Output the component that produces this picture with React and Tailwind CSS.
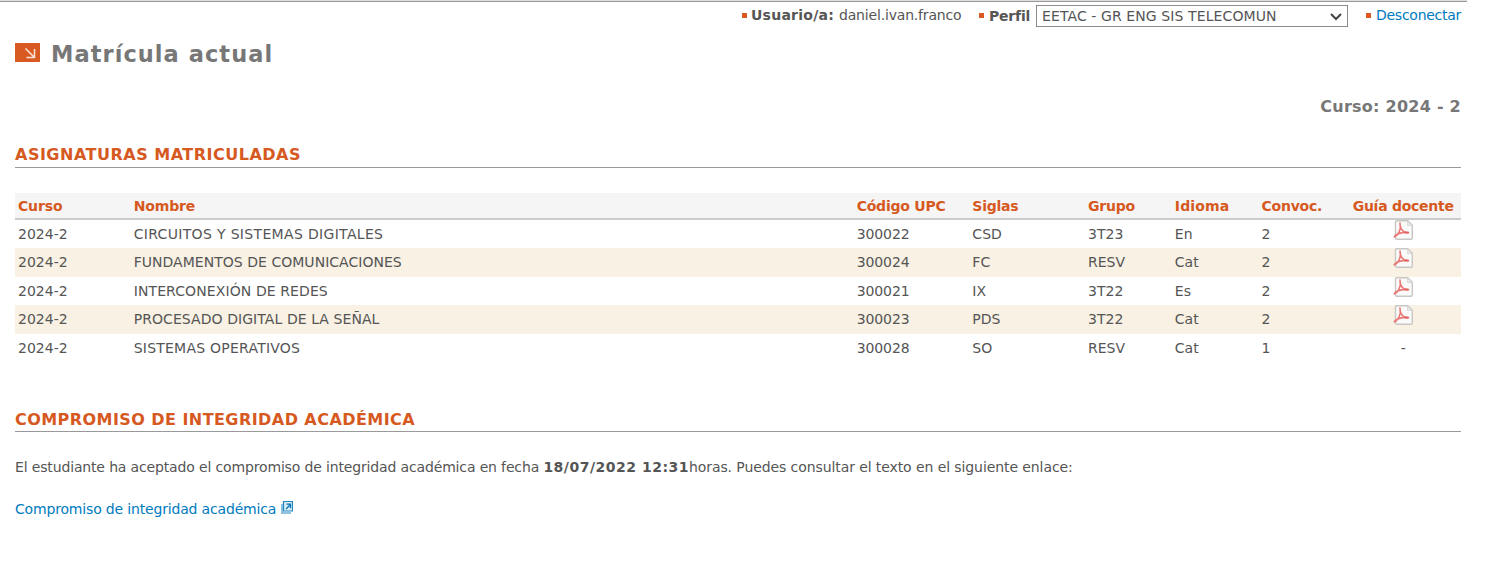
const columns = [
  ["Curso", "tracking-[-0.15px]"],
  ["Nombre", "tracking-[-0.15px]"],
  ["Código UPC", "tracking-[-0.22px]"],
  ["Siglas", "tracking-[-0.25px]"],
  ["Grupo", "tracking-[-0.25px]"],
  ["Idioma", "tracking-[0.15px]"],
  ["Convoc.", "tracking-[-0.25px]"],
];

const rows = [
  { cells: ["2024-2", "CIRCUITOS Y SISTEMAS DIGITALES", "300022", "CSD", "3T23", "En", "2"], name: "tracking-[0.33px]", pdf: true, style: "h-[28px]" },
  { cells: ["2024-2", "FUNDAMENTOS DE COMUNICACIONES", "300024", "FC", "RESV", "Cat", "2"], name: "tracking-[0.03px]", pdf: true, style: "h-[29px] bg-[#f8f1e4]" },
  { cells: ["2024-2", "INTERCONEXIÓN DE REDES", "300021", "IX", "3T22", "Es", "2"], name: "tracking-[0.1px]", pdf: true, style: "h-[28px]" },
  { cells: ["2024-2", "PROCESADO DIGITAL DE LA SEÑAL", "300023", "PDS", "3T22", "Cat", "2"], name: "tracking-[0.07px]", pdf: true, style: "h-[29px] bg-[#f8f1e4]" },
  { cells: ["2024-2", "SISTEMAS OPERATIVOS", "300028", "SO", "RESV", "Cat", "1"], name: "tracking-[0.23px]", pdf: false, style: "h-[28px]" },
];

const grid = "grid grid-cols-[8fr_50fr_8fr_8fr_6fr_6fr_6fr_8fr]";

function PdfIcon() {
  return (
    <svg className="block h-5 w-5" viewBox="0 0 20 20" fill="none">
      <path d="M2.500 2Q2.500 .7 3.800 .7H14.800l4.500 4.500V18q0 1.300-1.300 1.300H3.800Q2.500 19.300 2.500 18z" fill="#fafafa" stroke="#c8c7c4" strokeWidth="1.400" />
      <path d="M14.500 1v4.500h4.500z" fill="#e9e9e9" stroke="#d3d3d1" strokeWidth=".8" />
      <path d="M7 3c.8 3.200 .4 6.200-1 9.200-1.200 2.300-2.600 3.800-4.700 4.800M7 3c0 3.500 1.200 7 4 8.700 1.500 .9 3 1.100 4.500 1M1.300 16.800c2-2.800 6.500-4.200 10.500-4.400" stroke="#ea7976" strokeWidth="1.600" strokeLinecap="round" />
      <path d="M11.500 12.500h4" stroke="#e2605c" strokeWidth="2" />
    </svg>
  );
}

function Bullet({ className }) {
  return <span className={"h-[5px] w-[5px] shrink-0 bg-[#d85a22] " + className} />;
}

function SectionTitle({ children, className }) {
  return (
    <h2 className={"flex items-start border-b border-[#999] pt-px text-[16px] leading-5 font-bold whitespace-nowrap text-[#d6591f] " + className}>
      {children}
    </h2>
  );
}

export default function App() {
  return (
    <div className="h-[580px] w-[1500px] overflow-hidden bg-white font-['DejaVu_Sans',Verdana,sans-serif] text-[14px] leading-5 text-[#555]">
      <div className="h-[2px] w-[1467px] border-b border-[#999] bg-[#ddd]" />
      <div className="ml-[15px] w-[1446px]">
        <header className="flex h-[30px] items-start justify-end whitespace-nowrap">
          <Bullet className="mt-[11px] mr-1" />
          <b className="mt-[3px] w-[88px] tracking-[0.25px]">Usuario/a:</b>
          <span className="mt-[3px] w-[140px] tracking-[-0.18px]">daniel.ivan.franco</span>
          <Bullet className="mt-[11px] mr-[5px]" />
          <b className="mt-[4px] w-[47px] tracking-[-0.2px]">Perfil</b>
          <div className="mt-[3px] flex h-[22px] w-[312px] items-center justify-between border border-[#8c8c8c] pr-[5px] pl-[5px]">
            <span className="leading-5 tracking-[0.1px]">EETAC - GR ENG SIS TELECOMUN</span>
            <svg className="h-3 w-3" viewBox="0 0 12 12" fill="none" stroke="#444" strokeWidth="2">
              <path d="M1 4l5 5 5-5" />
            </svg>
          </div>
          <Bullet className="mt-[11px] mr-[5px] ml-[18px]" />
          <a className="mt-[3px] w-[85px] tracking-[-0.26px] text-[#007bc0]">Desconectar</a>
        </header>

        <div className="flex h-[64px] items-start pt-[8px]">
          <svg className="mt-[3px] h-[19px] w-[25px]" viewBox="0 0 25 19" fill="none">
            <path d="M0 0h25v19H0z" fill="#d85a22" />
            <path d="M10.500 5.500l8.500 8.500M11.500 14.500h8V6" stroke="#fbe3d8" strokeWidth="1.500" />
          </svg>
          <h1 className="ml-[11px] text-[22.5px] leading-[28px] font-bold tracking-[1.05px] whitespace-nowrap text-[#777]">Matrícula actual</h1>
        </div>

        <div className="flex h-[48px] justify-end pt-px text-[16px] font-bold tracking-[0.25px] whitespace-nowrap text-[#777]">Curso: 2024 - 2</div>

        <SectionTitle className="h-[24px] tracking-[0.5px]">ASIGNATURAS MATRICULADAS</SectionTitle>

        <div className="mt-[25px]">
          <div className={grid + " h-[27px] items-start border-b-2 border-[#ccc] bg-[#f5f5f5] pt-[3px] font-bold whitespace-nowrap text-[#d6591f]"}>
            {columns.map(([name, style]) => (
              <div key={name} className={"pl-[3px] " + style}>{name}</div>
            ))}
            <div className="flex justify-center tracking-[-0.27px]">Guía docente</div>
          </div>
          {rows.map((row) => (
            <div key={row.cells[1]} className={grid + " items-start whitespace-nowrap " + row.style}>
              {row.cells.map((cell, i) => (
                <div key={i} className={"pt-[4px] pl-[3px] " + (i === 1 ? row.name : i === 2 ? "tracking-[-0.1px]" : "")}>{cell}</div>
              ))}
              <div className="flex justify-center">{row.pdf ? <PdfIcon /> : <span className="pt-[4px]">-</span>}</div>
            </div>
          ))}
        </div>

        <SectionTitle className="mt-[47px] h-[23px] tracking-[0.44px]">COMPROMISO DE INTEGRIDAD ACADÉMICA</SectionTitle>

        <p className="mt-[25px] whitespace-nowrap">
          <span className="tracking-[-0.15px]">El estudiante ha aceptado el compromiso de integridad académica en fecha </span>
          <b className="tracking-[0.5px]">18/07/2022 12:31</b>
          <span className="tracking-[-0.09px]">horas. Puedes consultar el texto en el siguiente enlace:</span>
        </p>
        <a className="mt-[22px] flex items-start whitespace-nowrap text-[#007bc0]">
          <span className="tracking-[-0.17px]">Compromiso de integridad académica</span>
          <svg className="mt-[2px] ml-[5px] h-[13px] w-[12px]" viewBox="0 0 12 13" fill="none">
            <path d="M1 3v9H10" stroke="#8fc3e0" strokeWidth="2" />
            <path d="M2.500 .5h9v9.500h-9z" fill="#d9edf7" stroke="#2387bf" strokeWidth="1.200" />
            <path d="M5 8l4-4M5.500 3.200h4v4" stroke="#0875b5" strokeWidth="1.300" />
          </svg>
        </a>
      </div>
    </div>
  );
}
